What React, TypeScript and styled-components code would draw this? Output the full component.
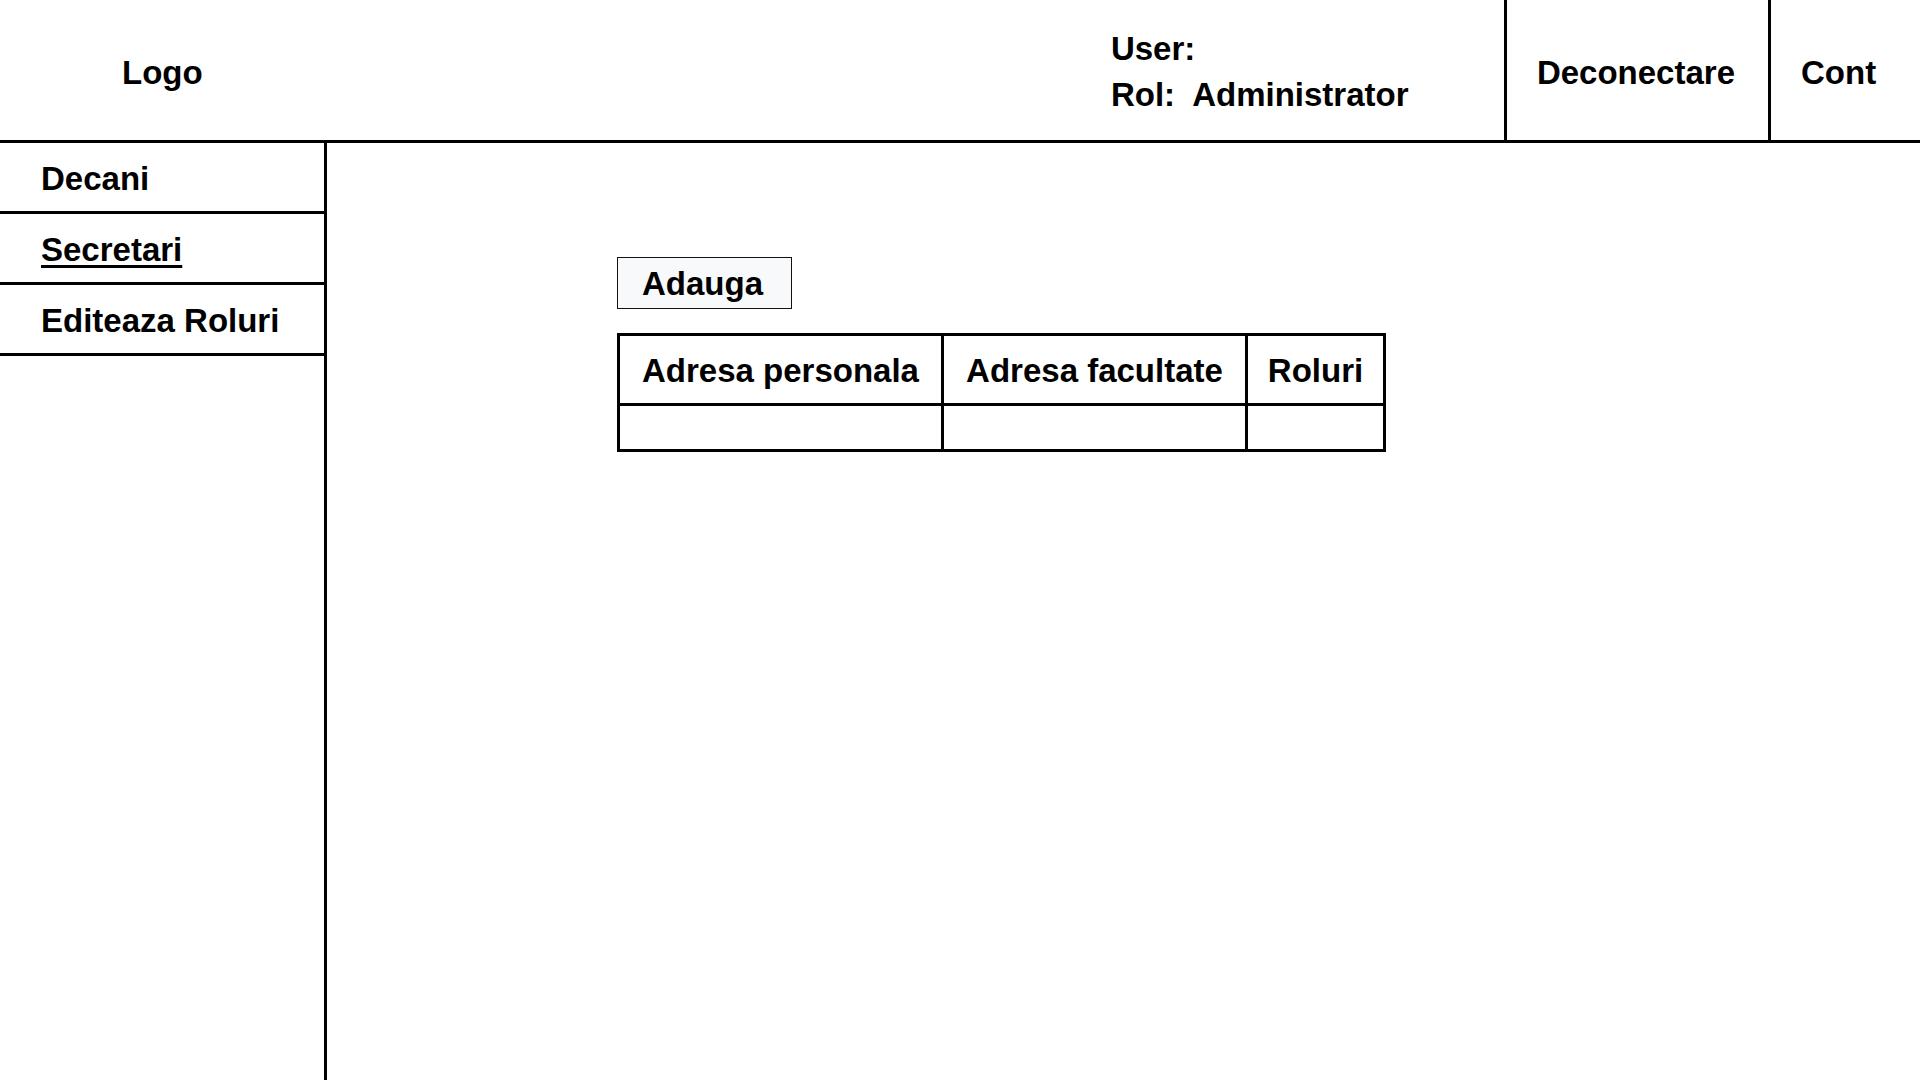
import React from "react";
import styled, { createGlobalStyle } from "styled-components";

const GlobalStyle = createGlobalStyle`
  html, body, #root {
    margin: 0;
    padding: 0;
    height: 100%;
  }
  body {
    background: #ffffff;
    color: #000000;
    font-family: "Liberation Sans", Arial, sans-serif;
    font-weight: 700;
    font-size: 33px;
  }
  * { box-sizing: border-box; }
`;

const Page = styled.div`
  display: flex;
  flex-direction: column;
  width: 1920px;
  height: 1080px;
  overflow: hidden;
`;

const Header = styled.header`
  display: flex;
  align-items: stretch;
  height: 143px;
  flex: none;
  border-bottom: 3px solid #000;
`;

const Logo = styled.div`
  flex: 1;
  display: flex;
  align-items: center;
  padding: 6px 0 0 122px;
  line-height: 46px;
`;

const UserInfo = styled.div`
  width: 393px;
  flex: none;
  display: flex;
  flex-direction: column;
  justify-content: center;
  padding: 4px 0 0 0;
  line-height: 46px;
  white-space: pre;
`;

const NavCell = styled.div<{ $width?: number }>`
  display: flex;
  align-items: center;
  flex: none;
  width: ${(p) => (p.$width ? `${p.$width}px` : "auto")};
  padding: 6px 33px 0 30px;
  border-left: 3px solid #000;
  line-height: 46px;
  cursor: pointer;
`;

const Body = styled.div`
  display: flex;
  flex: 1;
  min-height: 0;
`;

const Sidebar = styled.nav`
  width: 327px;
  flex: none;
  border-right: 3px solid #000;
  display: flex;
  flex-direction: column;
`;

const SideItem = styled.div<{ $active?: boolean }>`
  height: 71px;
  display: flex;
  align-items: center;
  padding: 4px 0 0 41px;
  border-bottom: 3px solid #000;
  line-height: 46px;
  cursor: pointer;
  text-decoration: ${(p) => (p.$active ? "underline" : "none")};
  text-decoration-thickness: 3px;
  text-underline-offset: 4px;
`;

const Main = styled.main`
  flex: 1;
  padding: 114px 0 0 290px;
  display: flex;
  flex-direction: column;
  align-items: flex-start;
`;

const AddButton = styled.button`
  width: 175px;
  height: 52px;
  border: 1px solid #111;
  background: #f8f9fb;
  font-family: "Liberation Sans", Arial, sans-serif;
  font-weight: 700;
  font-size: 33px;
  color: #000;
  padding: 2px 4px 0 0;
  cursor: pointer;
`;

const Table = styled.table`
  margin-top: 24px;
  border-collapse: separate;
  border-spacing: 0;
  border-top: 3px solid #000;
  border-left: 3px solid #000;
`;

const Cell = styled.td<{ $w: number; $head?: boolean }>`
  width: ${(p) => p.$w}px;
  min-width: ${(p) => p.$w}px;
  height: ${(p) => (p.$head ? 70 : 46)}px;
  padding: ${(p) => (p.$head ? "2px 0 0 0" : "0")};
  border-right: 3px solid #000;
  border-bottom: 3px solid #000;
  text-align: center;
  vertical-align: middle;
  font-size: 33px;
  font-weight: 700;
  line-height: 46px;
  white-space: nowrap;
`;

const columns = [
  { title: "Adresa personala", w: 324 },
  { title: "Adresa facultate", w: 304 },
  { title: "Roluri", w: 138 },
];

export default function App() {
  return (
    <>
      <GlobalStyle />
      <Page>
        <Header>
          <Logo>Logo</Logo>
          <UserInfo>
            <span>User:</span>
            <span>Rol:  Administrator</span>
          </UserInfo>
          <NavCell>Deconectare</NavCell>
          <NavCell $width={152}>Cont</NavCell>
        </Header>
        <Body>
          <Sidebar>
            <SideItem>Decani</SideItem>
            <SideItem $active>Secretari</SideItem>
            <SideItem>Editeaza Roluri</SideItem>
          </Sidebar>
          <Main>
            <AddButton>Adauga</AddButton>
            <Table>
              <thead>
                <tr>
                  {columns.map((c) => (
                    <Cell as="th" key={c.title} $w={c.w} $head>
                      {c.title}
                    </Cell>
                  ))}
                </tr>
              </thead>
              <tbody>
                <tr>
                  {columns.map((c) => (
                    <Cell key={c.title} $w={c.w} />
                  ))}
                </tr>
              </tbody>
            </Table>
          </Main>
        </Body>
      </Page>
    </>
  );
}
